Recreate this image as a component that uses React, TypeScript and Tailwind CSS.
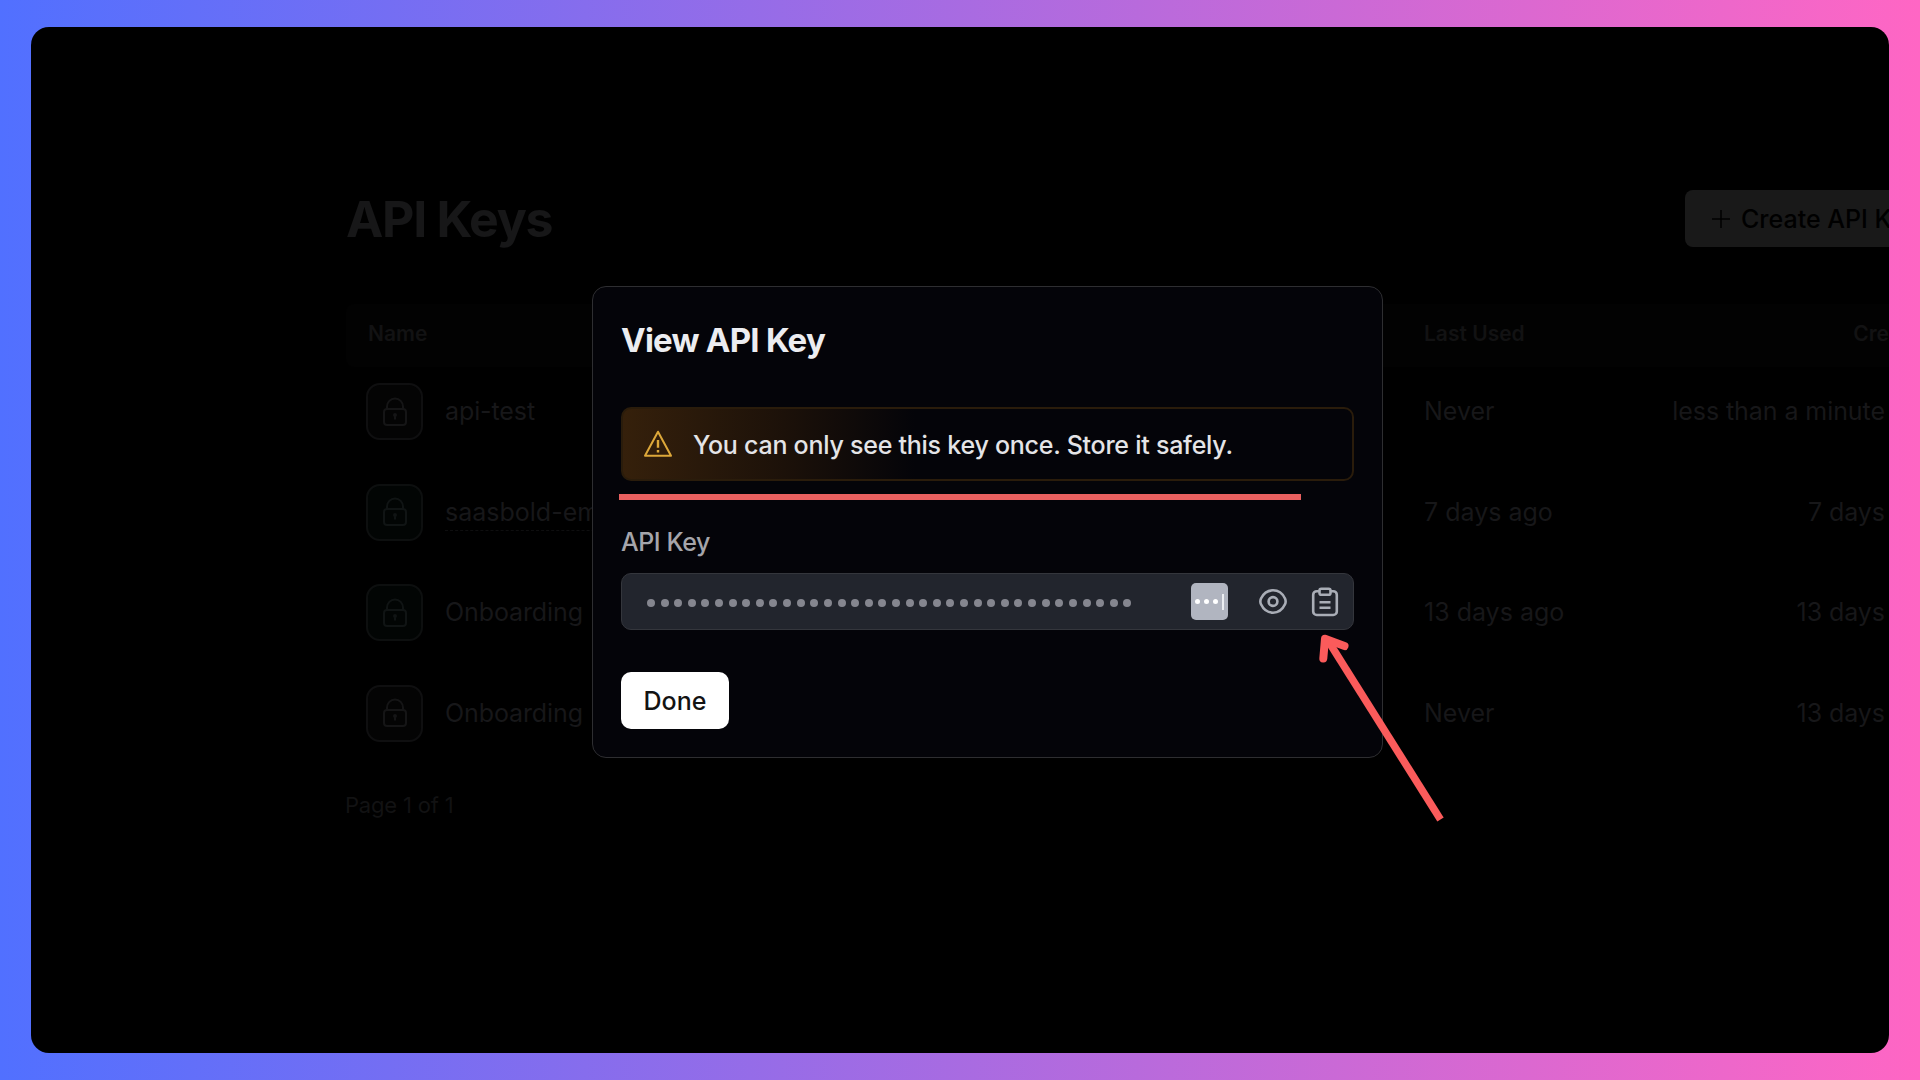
type KeyRow = { name: string; used: string; created: string; active: boolean; underline: boolean };

const rows: KeyRow[] = [
  { name: "api-test", used: "Never", created: "less than a minute ago", active: false, underline: false },
  { name: "saasbold-email", used: "7 days ago", created: "7 days ago", active: true, underline: true },
  { name: "Onboarding", used: "13 days ago", created: "13 days ago", active: true, underline: false },
  { name: "Onboarding", used: "Never", created: "13 days ago", active: false, underline: false },
];

function LockIcon() {
  return (
    <svg width="26" height="32" viewBox="0 0 26 32" fill="none" stroke="currentColor" strokeWidth="2">
      <rect x="2" y="13" width="22" height="16" rx="3" />
      <path d="M5 13V10.500a8 8 0 0 1 16 0V13M13 18.500v5" />
      <circle cx="13" cy="19" r="1" />
    </svg>
  );
}

function WarningIcon() {
  return (
    <svg className="shrink-0" width="30" height="29" viewBox="0 0 30 29" fill="none" stroke="#dda83a" strokeWidth="2">
      <path d="M15 1.700 28 25.800H2Z" strokeLinejoin="round" />
      <path d="M15 10.100v7.600M15 20.100v2.400" strokeWidth="2.400" />
    </svg>
  );
}

function EyeIcon() {
  return (
    <svg width="30" height="28" viewBox="0 0 30 28" fill="none" stroke="#a9adb6" strokeWidth="2.600">
      <path d="M15 2.300c5.600 0 9.600 3.200 12 8.200.8 1.800.8 4 0 5.800C24.600 21.400 20.600 24.700 15 24.700S5.400 21.400 3 16.300c-.8-1.800-.8-4 0-5.800C5.400 5.500 9.400 2.300 15 2.300Z" />
      <circle cx="15" cy="13.500" r="4.400" />
    </svg>
  );
}

function ClipboardIcon() {
  return (
    <svg width="28" height="30" viewBox="0 0 28 30" fill="none" stroke="#a9adb6" strokeWidth="2.600">
      <path d="M8.500 4.200H5.800a3.600 3.600 0 0 0-3.600 3.600v16.600A3.600 3.600 0 0 0 5.800 28h16.400a3.600 3.600 0 0 0 3.600-3.600V7.800a3.600 3.600 0 0 0-3.600-3.600h-2.700" />
      <rect x="8.500" y="1.700" width="11" height="6" rx="1.800" />
      <path d="M8.500 15.200h11M8.500 20.700h11" />
    </svg>
  );
}

function KeysPage() {
  return (
    <div className="ml-[315px] w-[1611px] pt-[163px]">
      <div className="flex h-[57px] items-center">
        <h1 className="flex-1 text-[50px] leading-none font-bold tracking-[-0.026em] text-[#171718]">API Keys</h1>
        <div className="mr-[59px] flex h-[57px] w-[213px] items-center rounded-lg bg-[#191919] pl-[27px] text-[25px] leading-none font-medium whitespace-nowrap text-black">
          <svg className="mr-[11px] shrink-0" width="18" height="20" viewBox="0 0 18 20" stroke="currentColor" strokeWidth="1.500">
            <path d="M9 1v18M0 10h18" />
          </svg>
          <span className="mt-[2px]">Create API Key</span>
        </div>
      </div>
      <div className="mt-[57px] grid h-[63px] grid-cols-[1057px_150px_1fr] items-center rounded-lg bg-[#020202] px-[21px] text-[21px] leading-none font-semibold text-[#121213]">
        <span className="-mt-1 ml-px">Name</span>
        <span className="-mt-1">Last Used</span>
        <span className="-mt-1 mr-[2px] text-right">Created</span>
      </div>
      {rows.map((r, i) => (
        <div
          key={i}
          className="grid h-[100.500px] grid-cols-[1057px_150px_1fr] items-center px-[21px] pb-[11px] text-[25px] leading-none whitespace-nowrap text-[#171719]"
        >
          <div className="-ml-px flex items-center gap-[22px]">
            <div
              className={
                r.active
                  ? "flex size-[57px] items-center justify-center rounded-[14px] border-2 border-[#0d0f0f] bg-[#020504] text-[#101414]"
                  : "flex size-[57px] items-center justify-center rounded-[14px] border-2 border-[#0f0f10] bg-[#040404] text-[#151516]"
              }
            >
              <LockIcon />
            </div>
            <span className={r.underline ? "border-b border-dashed border-[#0e0e0f] pt-[6px] pb-[5px]" : "tracking-[-0.004em]"}>{r.name}</span>
          </div>
          <span>{r.used}</span>
          <span className="text-right tracking-[-0.003em]">{r.created}</span>
        </div>
      ))}
      <div className="mt-[25px] -ml-px text-[22px] leading-none tracking-[-0.008em] text-[#121213]">Page 1 of 1</div>
    </div>
  );
}

function KeyDialog() {
  return (
    <div className="absolute top-[259px] left-[561px] h-[472px] w-[791px] rounded-[14px] border border-[#2e2e31] bg-[#040409] px-[28px]">
      <h2 className="mt-[35px] text-[33px] leading-[36px] font-bold tracking-[-0.023em] text-[#ecedf1]">View API Key</h2>
      <div className="mt-[49px] flex h-[74px] items-center rounded-[10px] border-2 border-[#2a1c0b] bg-[linear-gradient(90deg,#35200b_0%,#1c1109_22%,#040409_40%)] pl-[20px]">
        <WarningIcon />
        <span className="mt-[2px] ml-[20px] text-[25px] leading-none font-[450] tracking-[-0.010em] whitespace-nowrap text-[#e4e4e7]">
          You can only see this key once. Store it safely.
        </span>
      </div>
      <div className="-ml-[2px] mt-[13px] h-[6px] w-[682px] bg-[#e96060]" />
      <div className="mt-[28px] text-[25px] leading-[28px] font-[450] tracking-[-0.018em] text-[#a5a5ab]">API Key</div>
      <div className="mt-[17px] flex h-[57px] items-center rounded-[10px] border border-[#34363c] bg-[#22252d] pl-[25px]">
        <div className="mt-[3px] flex gap-[5.620px]">
          {Array.from({ length: 36 }, (_, i) => (
            <span key={i} className="size-2 rounded-full bg-[#85868f]" />
          ))}
        </div>
        <div className="ml-[60px] flex h-[37px] w-[37px] items-center justify-center gap-[4px] rounded-[5px] bg-[#b1b5c0]">
          <span className="size-[5px] rounded-full bg-white" />
          <span className="size-[5px] rounded-full bg-white" />
          <span className="size-[5px] rounded-full bg-white" />
          <span className="h-[16px] w-[2px] bg-[#eceef2]" />
        </div>
        <div className="ml-[30px]"><EyeIcon /></div>
        <div className="ml-[23px]"><ClipboardIcon /></div>
      </div>
      <div className="mt-[42px] flex h-[57px] w-[108px] items-center justify-center rounded-[10px] bg-white text-[25px] leading-none font-medium text-[#131313]">
        <span className="mt-[2px]">Done</span>
      </div>
    </div>
  );
}

export default function App() {
  return (
    <div className="h-[1080px] w-[1920px] overflow-hidden bg-[linear-gradient(90deg,#5170ff,#ff66c4)] pt-[27px] pl-[31px] font-['Inter',sans-serif]">
      <div className="relative h-[1026px] w-[1858px] overflow-hidden rounded-[18px] bg-black">
        <KeysPage />
        <KeyDialog />
        <svg className="absolute top-[603px] left-[1282px]" width="140" height="200" viewBox="0 0 140 200" fill="none" stroke="#fb5b5b">
          <path d="M14 9 127.500 189.500" strokeWidth="7.500" />
          <path d="M10.300 28.500 12 8.800 31.500 16" strokeWidth="8" strokeLinecap="round" strokeLinejoin="round" />
        </svg>
      </div>
    </div>
  );
}
